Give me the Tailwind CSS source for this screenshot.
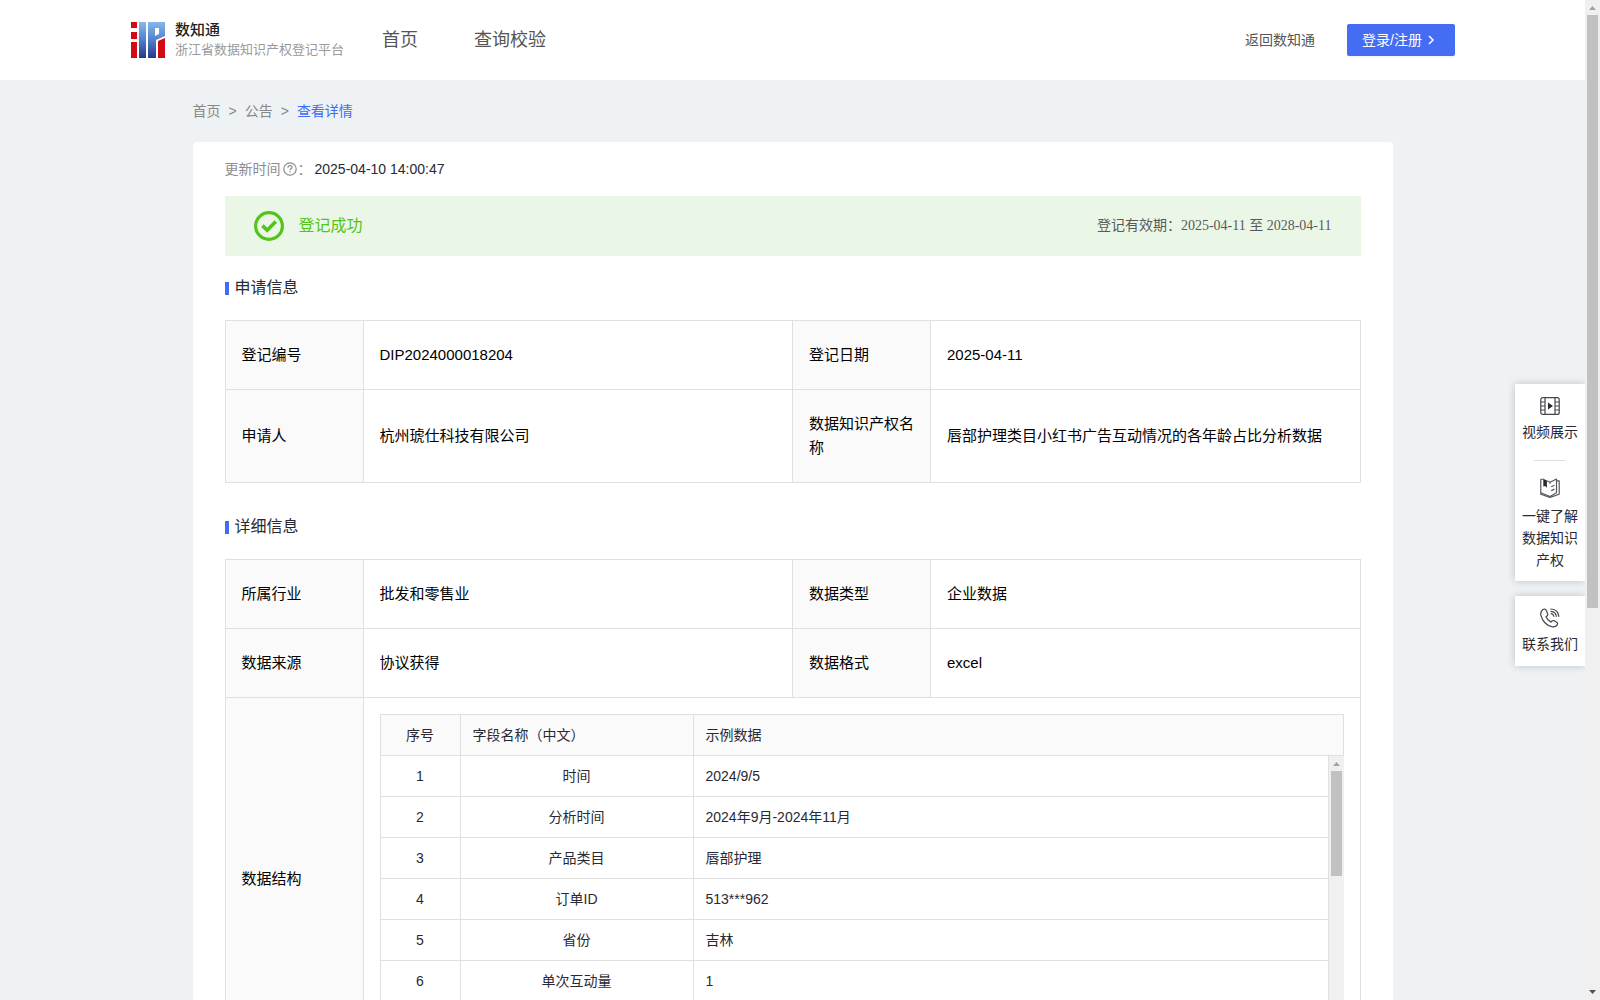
<!DOCTYPE html>
<html lang="zh-CN">
<head>
<meta charset="utf-8">
<meta name="viewport" content="width=device-width, initial-scale=1">
<title>数知通</title>
<script src="https://cdn.jsdelivr.net/npm/@tailwindcss/browser@4"></script>
</head>
<body class="flex h-screen overflow-hidden bg-[#eef2f5] font-['Liberation_Sans','Noto_Sans_CJK_SC',sans-serif] text-sm text-[#292933]">
<div class="relative min-w-0 flex-1 overflow-hidden">

  <header class="flex h-20 items-center justify-between bg-white px-[130px] text-[#555]">
    <div class="flex items-center">
      <a href="#" class="flex w-[252px] items-center gap-[9px]">
        <svg class="h-9 w-[36px] shrink-0" viewBox="0 0 36 36" aria-hidden="true">
          <defs>
            <linearGradient id="blue" gradientUnits="userSpaceOnUse" x1="0" y1="0" x2="0" y2="36"><stop offset="0" stop-color="#86b8ec"/><stop offset=".45" stop-color="#5686cf"/><stop offset="1" stop-color="#27388a"/></linearGradient>
          </defs>
          <path d="M1 0h6v6H1zM1 10h6v7H1zM1 20h6v16H1z" fill="#d20a12"/>
          <path d="M9 0h7v36H9z" fill="url(#blue)"/>
          <path d="M18 0h17v14l-9 4v18h-8zM25 6v8l4-2V6z" fill="url(#blue)" fill-rule="evenodd"/>
          <path d="M28 19l7-3v20h-7z" fill="#d20a12"/>
        </svg>
        <span class="flex flex-col whitespace-nowrap">
          <span class="text-[15px] leading-5 font-medium text-[#222]">数知通</span>
          <span class="text-[13px] leading-5 text-[#9a9a9a]">浙江省数据知识产权登记平台</span>
        </span>
      </a>
      <nav class="flex gap-14 text-lg leading-6">
        <a href="#">首页</a>
        <a href="#">查询校验</a>
      </nav>
    </div>
    <div class="flex items-center gap-8">
      <a href="#">返回数知通</a>
      <button type="button" class="flex h-8 w-[108px] items-center gap-1 rounded-xs bg-[#456df4] px-[15px] text-white shadow-[0_2px_0_rgba(0,0,0,0.04)]">登录/注册
        <svg class="size-3" viewBox="0 0 12 12" fill="none" stroke="currentColor" stroke-width="1.5" aria-hidden="true"><path d="M3 2l4 4-4 4"/></svg>
      </button>
    </div>
  </header>

  <div class="mx-auto w-full max-w-[1200px]">
    <nav class="flex h-[62px] items-center gap-2 text-[#888]" aria-label="面包屑">
      <a href="#">首页</a><span>&gt;</span><a href="#">公告</a><span>&gt;</span><a href="#" class="text-[#3d6df5]">查看详情</a>
    </nav>

    <main class="rounded-t bg-white px-8 pb-8">
      <div class="flex h-[54px] items-center">
        <span class="text-[#8c8c92]">更新时间</span>
        <svg class="ml-0.5 size-3.5 text-[#8c8c92]" viewBox="0 0 14 14" fill="none" stroke="currentColor" stroke-width="1.2" aria-hidden="true"><circle cx="7" cy="7" r="6.2"/><path d="M5 5.700c0-1.200.8-2 2-2s2 .8 2 1.800c0 1.300-2 1.400-2 2.700"/><path d="M7 9.300v1.200"/></svg>
        <span class="w-[18px] pl-px text-[#8c8c92]">：</span>
        <span>2025-04-10 14:00:47</span>
      </div>

      <section class="flex h-[60px] items-center justify-between bg-[#ebf7e6] px-[29px]">
        <div class="flex items-center gap-[15px] text-base text-[#52c41a]">
          <svg class="size-[30px]" viewBox="0 0 30 30" fill="none" stroke="currentColor" aria-hidden="true"><circle cx="15" cy="15" r="13.4" stroke-width="3.2"/><path d="M8.400 14.600l4.800 4.700 8.600-8.800" stroke-width="3.6"/></svg>
          登记成功
        </div>
        <p class="font-['Liberation_Serif','Noto_Sans_CJK_SC',serif] text-[#595959]">登记有效期：2025-04-11 至 2028-04-11</p>
      </section>

      <h2 class="flex h-16 items-center gap-1.5 text-base"><span class="h-[13px] w-1 bg-[#416cf5]"></span>申请信息</h2>
      <table class="w-full table-fixed border-collapse text-left text-[15px] leading-6 text-black">
        <colgroup><col class="w-[138px]"><col><col class="w-[138px]"><col></colgroup>
        <tbody>
          <tr>
            <th scope="row" class="border border-[#e0e0e0] bg-[#fafafa] px-4 py-[22px] font-normal">登记编号</th>
            <td class="border border-[#e0e0e0] px-4 py-[22px]">DIP2024000018204</td>
            <th scope="row" class="border border-[#e0e0e0] bg-[#fafafa] px-4 py-[22px] font-normal">登记日期</th>
            <td class="border border-[#e0e0e0] px-4 py-[22px]">2025-04-11</td>
          </tr>
          <tr>
            <th scope="row" class="border border-[#e0e0e0] bg-[#fafafa] px-4 py-[22px] font-normal">申请人</th>
            <td class="border border-[#e0e0e0] px-4 py-[22px]">杭州琥仕科技有限公司</td>
            <th scope="row" class="border border-[#e0e0e0] bg-[#fafafa] px-4 py-[22px] font-normal">数据知识产权名称</th>
            <td class="border border-[#e0e0e0] px-4 py-[22px]">唇部护理类目小红书广告互动情况的各年龄占比分析数据</td>
          </tr>
        </tbody>
      </table>

      <h2 class="mt-3 flex h-16 items-center gap-1.5 text-base"><span class="h-[13px] w-1 bg-[#416cf5]"></span>详细信息</h2>
      <table class="w-full table-fixed border-collapse text-left text-[15px] leading-6 text-black">
        <colgroup><col class="w-[138px]"><col><col class="w-[138px]"><col></colgroup>
        <tbody>
          <tr>
            <th scope="row" class="border border-[#e0e0e0] bg-[#fafafa] px-4 py-[22px] font-normal">所属行业</th>
            <td class="border border-[#e0e0e0] px-4 py-[22px]">批发和零售业</td>
            <th scope="row" class="border border-[#e0e0e0] bg-[#fafafa] px-4 py-[22px] font-normal">数据类型</th>
            <td class="border border-[#e0e0e0] px-4 py-[22px]">企业数据</td>
          </tr>
          <tr>
            <th scope="row" class="border border-[#e0e0e0] bg-[#fafafa] px-4 py-[22px] font-normal">数据来源</th>
            <td class="border border-[#e0e0e0] px-4 py-[22px]">协议获得</td>
            <th scope="row" class="border border-[#e0e0e0] bg-[#fafafa] px-4 py-[22px] font-normal">数据格式</th>
            <td class="border border-[#e0e0e0] px-4 py-[22px]">excel</td>
          </tr>
          <tr>
            <th scope="row" class="border border-[#e0e0e0] bg-[#fafafa] px-4 font-normal">数据结构</th>
            <td colspan="3" class="border border-[#e0e0e0] p-4">
              <div class="text-sm text-[#292933]">
                <table class="w-full table-fixed border-collapse border border-[#e0e0e0] bg-[#fafafa]">
                  <colgroup><col class="w-20"><col class="w-[233px]"><col></colgroup>
                  <thead>
                    <tr class="h-[41px]">
                      <th scope="col" class="border border-[#e0e0e0] text-center font-normal">序号</th>
                      <th scope="col" class="border border-[#e0e0e0] px-3 font-normal">字段名称（中文）</th>
                      <th scope="col" class="border border-[#e0e0e0] px-3 font-normal">示例数据</th>
                    </tr>
                  </thead>
                </table>
                <div class="flex h-[287px] overflow-hidden border-l border-[#e0e0e0]">
                  <div class="min-w-0 flex-1">
                    <table class="w-full table-fixed border-separate border-spacing-0 [&_td]:border-r [&_td]:border-b [&_td]:border-[#e0e0e0] [&_tr]:h-[41px]">
                      <colgroup><col class="w-20"><col class="w-[233px]"><col></colgroup>
                      <tbody>
                        <tr><td class="text-center">1</td><td class="text-center">时间</td><td class="px-3">2024/9/5</td></tr>
                        <tr><td class="text-center">2</td><td class="text-center">分析时间</td><td class="px-3">2024年9月-2024年11月</td></tr>
                        <tr><td class="text-center">3</td><td class="text-center">产品类目</td><td class="px-3">唇部护理</td></tr>
                        <tr><td class="text-center">4</td><td class="text-center">订单ID</td><td class="px-3">513***962</td></tr>
                        <tr><td class="text-center">5</td><td class="text-center">省份</td><td class="px-3">吉林</td></tr>
                        <tr><td class="text-center">6</td><td class="text-center">单次互动量</td><td class="px-3">1</td></tr>
                      </tbody>
                    </table>
                  </div>
                  <div class="flex w-[15px] flex-col items-center bg-[#f0f0f0]" aria-hidden="true">
                    <svg class="h-[15px] w-[15px]" viewBox="0 0 15 15"><path d="M4 10h7L7.500 6z" fill="#a3a3a3"/></svg>
                    <div class="h-[105px] w-[11px] bg-[#c1c1c1]"></div>
                  </div>
                </div>
              </div>
            </td>
          </tr>
        </tbody>
      </table>
    </main>
  </div>

  <aside class="absolute top-[384px] right-0 flex w-[70px] flex-col gap-[15px] text-center leading-[22px]">
    <div class="flex flex-col items-center bg-white px-[7px] pt-3 pb-2.5 shadow-[0_0_8px_rgba(0,0,0,0.2)]">
      <a href="#" class="flex flex-col items-center gap-[5px]">
        <svg class="size-5" viewBox="0 0 20 20" fill="none" stroke="#44464c" stroke-width="1.2" aria-hidden="true"><rect x=".8" y="1.600" width="18.400" height="16.800" rx="2"/><path d="M5 1.600v16.800M15 1.600v16.800M.8 6H5M.8 10H5M.8 14H5M15 6h4.200M15 10h4.200M15 14h4.200"/><path d="M8 6.500v7l5-3.500z" fill="#292933" stroke="none"/></svg>
        视频展示
      </a>
      <hr class="my-[17px] w-8 border-[#e0e0e0]">
      <a href="#" class="flex flex-col items-center gap-[7px]">
        <svg class="size-5" viewBox="0 0 20 20" fill="none" stroke="#55575c" stroke-width="1.200" stroke-linejoin="round" aria-hidden="true"><path d="M3.500 1L.8 1.500v13.300l9.200 3.700 6.500-3.700V1L10 4.200 6.700 2.800"/><path d="M16.500 2.800h2.700v13.400L10 19.400.8 16.200v-1.400M10 4.200v1.500M11.200 8.800l3.300-1.500M11.200 12.600l3.300-1.500"/><path d="M3.300.8l3.600 1.600v7.400L5.100 8 3.300 8.500z" fill="#292933" stroke="none"/></svg>
        一键了解数据知识产权
      </a>
    </div>
    <a href="#" class="flex flex-col items-center gap-[5px] bg-white px-[7px] pt-3 pb-[11px] shadow-[0_0_8px_rgba(0,0,0,0.2)]">
      <svg class="size-5" viewBox="0 0 20 20" fill="none" stroke="#44464c" stroke-width="1.200" stroke-linecap="round" stroke-linejoin="round" aria-hidden="true"><path d="M3.600 1.300C1.300 2.300.3 4.600 1 7.700c1.300 5.300 5.600 9.900 10.700 11 2.600.5 4.600-.2 5.600-2.100.5-1 .2-1.800-.6-2.300l-2.600-1.500c-.9-.5-1.700-.3-2.300.4l-.8.9c-2.500-1.100-4.100-2.900-5-5.300l1-.8c.8-.6 1-1.400.6-2.300L6.200 2.200c-.5-1-1.500-1.400-2.600-.9z"/><path d="M10.800 1c4.600.3 7.700 3 8 7.300M11 3.300c3 .3 5 2 5.300 5M11.200 5.700c1.500.2 2.400 1 2.600 2.600"/></svg>
      联系我们
    </a>
  </aside>
</div>

<div class="flex w-[15px] shrink-0 flex-col items-center bg-[#f0f0f0]" aria-hidden="true">
  <svg class="h-[15px] w-[15px]" viewBox="0 0 15 15"><path d="M4 10h7L7.500 6z" fill="#a3a3a3"/></svg>
  <div class="h-[593px] w-[11px] bg-[#c1c1c1]"></div>
  <svg class="mt-auto h-[15px] w-[15px]" viewBox="0 0 15 15"><path d="M4 5h7l-3.500 4z" fill="#505050"/></svg>
</div>
</body>
</html>
